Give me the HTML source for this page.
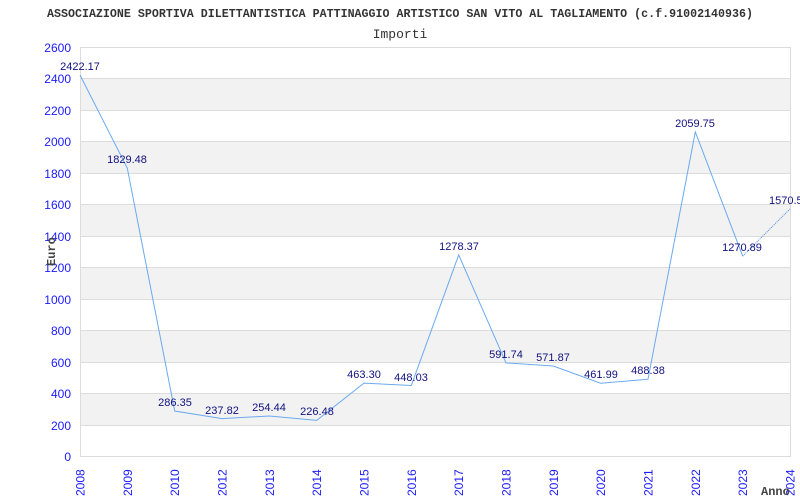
<!DOCTYPE html>
<html><head><meta charset="utf-8"><style>
html,body{margin:0;padding:0;background:#fff;}
svg{display:block;}
</style></head><body>
<svg width="800" height="500" xmlns="http://www.w3.org/2000/svg">
<rect width="800" height="500" fill="#fff"/>
<text x="47" y="17" textLength="706" lengthAdjust="spacingAndGlyphs" font-family="Liberation Mono, monospace" font-size="12" font-weight="bold" fill="#333">ASSOCIAZIONE SPORTIVA DILETTANTISTICA PATTINAGGIO ARTISTICO SAN VITO AL TAGLIAMENTO (c.f.91002140936)</text>
<text x="400" y="38" text-anchor="middle" font-family="Liberation Mono, monospace" font-size="13" fill="#333">Importi</text>
<g fill="#f2f2f2">
<rect x="80" y="78.5" width="710" height="31.5"/>
<rect x="80" y="141.5" width="710" height="31.5"/>
<rect x="80" y="204.5" width="710" height="31.5"/>
<rect x="80" y="267.5" width="710" height="31.5"/>
<rect x="80" y="330.5" width="710" height="31.5"/>
<rect x="80" y="393.5" width="710" height="31.5"/>
</g>
<g stroke="#dcdcdc" stroke-width="1">
<line x1="80" x2="790" y1="47.5" y2="47.5"/>
<line x1="80" x2="790" y1="78.5" y2="78.5"/>
<line x1="80" x2="790" y1="110.5" y2="110.5"/>
<line x1="80" x2="790" y1="141.5" y2="141.5"/>
<line x1="80" x2="790" y1="173.5" y2="173.5"/>
<line x1="80" x2="790" y1="204.5" y2="204.5"/>
<line x1="80" x2="790" y1="236.5" y2="236.5"/>
<line x1="80" x2="790" y1="267.5" y2="267.5"/>
<line x1="80" x2="790" y1="299.5" y2="299.5"/>
<line x1="80" x2="790" y1="330.5" y2="330.5"/>
<line x1="80" x2="790" y1="362.5" y2="362.5"/>
<line x1="80" x2="790" y1="393.5" y2="393.5"/>
<line x1="80" x2="790" y1="425.5" y2="425.5"/>
<line x1="80" x2="790" y1="456.5" y2="456.5"/>
<line x1="80.5" x2="80.5" y1="47" y2="457"/>
<line x1="790.5" x2="790.5" y1="47" y2="457"/>
</g>
<g font-family="Liberation Sans, sans-serif" font-size="12" fill="#1a1aff" text-anchor="end">
<text x="71" y="52">2600</text><text x="71" y="83">2400</text><text x="71" y="115">2200</text>
<text x="71" y="146">2000</text><text x="71" y="178">1800</text><text x="71" y="209">1600</text>
<text x="71" y="241">1400</text><text x="71" y="272">1200</text><text x="71" y="304">1000</text>
<text x="71" y="335">800</text><text x="71" y="367">600</text><text x="71" y="398">400</text>
<text x="71" y="430">200</text><text x="71" y="461">0</text>
</g>
<g font-family="Liberation Sans, sans-serif" font-size="12" fill="#1a1aff">
<text transform="translate(84.5,496) rotate(-90)">2008</text>
<text transform="translate(131.8,496) rotate(-90)">2009</text>
<text transform="translate(179.2,496) rotate(-90)">2010</text>
<text transform="translate(226.5,496) rotate(-90)">2012</text>
<text transform="translate(273.8,496) rotate(-90)">2013</text>
<text transform="translate(321.2,496) rotate(-90)">2014</text>
<text transform="translate(368.5,496) rotate(-90)">2015</text>
<text transform="translate(415.8,496) rotate(-90)">2016</text>
<text transform="translate(463.2,496) rotate(-90)">2017</text>
<text transform="translate(510.5,496) rotate(-90)">2018</text>
<text transform="translate(557.8,496) rotate(-90)">2019</text>
<text transform="translate(605.2,496) rotate(-90)">2020</text>
<text transform="translate(652.5,496) rotate(-90)">2021</text>
<text transform="translate(699.8,496) rotate(-90)">2022</text>
<text transform="translate(747.2,496) rotate(-90)">2023</text>
<text transform="translate(794.5,496) rotate(-90)">2024</text>
</g>
<text transform="translate(55,266) rotate(-90)" font-family="Liberation Mono, monospace" font-size="12" font-weight="bold" fill="#444">Euro</text>
<text x="761" y="495" font-family="Liberation Mono, monospace" font-size="12" font-weight="bold" fill="#444">Anno</text>
<polyline fill="none" stroke="#6aaaf0" stroke-width="1" points="80,75 127.3,168.2 174.7,411 222,418.6 269.3,416 316.7,420.4 364,383.1 411.3,385.5 458.7,254.9 506,362.9 553.3,366 600.7,383.3 648,379.2 695.3,132 742.7,256.1"/>
<line x1="742.7" y1="256.1" x2="790" y2="208.9" stroke="#4a8ad8" stroke-width="1" stroke-dasharray="1,1"/>
<g font-family="Liberation Sans, sans-serif" font-size="11" fill="#101080" text-anchor="middle">
<text x="80" y="70">2422.17</text>
<text x="127" y="163">1829.48</text>
<text x="175" y="406">286.35</text>
<text x="222" y="414">237.82</text>
<text x="269" y="411">254.44</text>
<text x="317" y="415">226.48</text>
<text x="364" y="378">463.30</text>
<text x="411" y="381">448.03</text>
<text x="459" y="250">1278.37</text>
<text x="506" y="358">591.74</text>
<text x="553" y="361">571.87</text>
<text x="601" y="378">461.99</text>
<text x="648" y="374">488.38</text>
<text x="695" y="127">2059.75</text>
<text x="742" y="251">1270.89</text>
<text x="769" y="204" text-anchor="start">1570.5</text>
</g>
</svg>
</body></html>
